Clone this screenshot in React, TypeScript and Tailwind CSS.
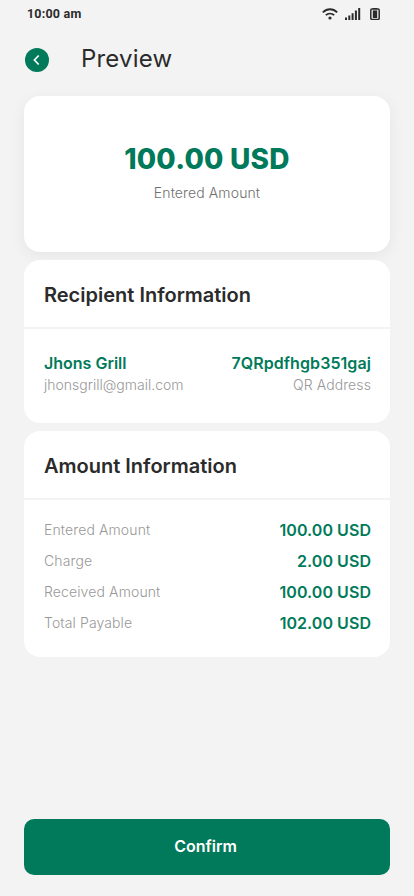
interface Row {
  label: string
  value: string
}

const amountRows: Row[] = [
  { label: "Entered Amount", value: "100.00 USD" },
  { label: "Charge", value: "2.00 USD" },
  { label: "Received Amount", value: "100.00 USD" },
  { label: "Total Payable", value: "102.00 USD" },
]

function StatusBar() {
  return (
    <div className="flex h-7 items-center justify-between pl-[27px] pr-[33px]">
      <span className="font-[Roboto] text-[12.5px] font-bold leading-[14px] tracking-[0.2px] text-[#2b2b2b]">10:00 am</span>
      <div className="flex items-center text-[#2b2b2b]">
        <svg width="16" height="12" viewBox="0 0 16 12" fill="none" stroke="currentColor" strokeWidth="1.8">
          <path d="M.8 4.4C5 .2 11 .2 15.2 4.4M3.8 7.2c2.4-2.2 6-2.2 8.4 0" />
          <circle cx="8" cy="10" r="1.6" fill="currentColor" stroke="none" />
        </svg>
        <svg className="ml-[7px]" width="16" height="12" viewBox="0 0 16 12" fill="currentColor">
          <path d="M0 9.5h2V12H0zM3.3 7.5h2V12h-2zM6.6 5.2h2V12h-2zM9.9 2.4h2V12h-2zM13.2 0h2v12h-2z" />
        </svg>
        <svg className="ml-[9px] mr-px" width="10" height="12" viewBox="0 0 10 12" fill="none" stroke="currentColor">
          <path d="M2.8 0h4.4v1H2.8z" fill="currentColor" stroke="none" />
          <rect x=".8" y="1" width="8.4" height="10.4" rx="1.2" strokeWidth="1.5" />
          <path d="M2.8 2.4h4.4V10H2.8z" fill="currentColor" stroke="none" />
        </svg>
      </div>
    </div>
  )
}

function Header() {
  return (
    <header className="flex h-[68px] items-center gap-8 px-[25px] pb-1">
      <button className="flex size-6 items-center justify-center rounded-full bg-[#007a5a]" aria-label="Back">
        <svg width="12" height="12" viewBox="0 0 12 12" fill="none" stroke="white" strokeWidth="1.7">
          <path d="M7.7 1.5 3.4 6l4.3 4.5" />
        </svg>
      </button>
      <h1 className="-mt-0.5 text-[24px] leading-8 tracking-[0.2px] text-[#2b2b2b]">Preview</h1>
    </header>
  )
}

export default function App() {
  return (
    <div className="flex h-[896px] w-[414px] flex-col bg-[#f3f3f3] font-[Inter,sans-serif]">
      <StatusBar />
      <Header />

      <main className="flex flex-col gap-2 px-6">
        {/* Amount */}
        <section className="flex h-[156px] flex-col items-center justify-center rounded-2xl bg-white pb-1 shadow-[0_4px_16px_rgba(0,0,0,0.06)]">
          <p className="text-[28px] font-extrabold leading-[38px] tracking-[0.25px] text-[#007a5a]">100.00 USD</p>
          <p className="mt-[3px] text-[14px] font-light leading-6 tracking-[0.12px] text-[#6f6f6f]">Entered Amount</p>
        </section>

        {/* Recipient */}
        <section className="relative h-[163px] rounded-2xl bg-white">
          <h2 className="h-[69px] border-b-2 border-[#f3f3f3] px-5 pt-5 text-[20px] font-semibold leading-[30px] text-[#2b2b2b]">
            Recipient Information
          </h2>
          <div className="flex justify-between pl-5 pr-[19px] pt-[22px]">
            <div>
              <p className="text-[16px] font-semibold leading-6 text-[#007a5a]">Jhons Grill</p>
              <p className="text-[14px] font-light leading-5 text-[#989898]">jhonsgrill@gmail.com</p>
            </div>
            <div className="text-right">
              <p className="text-[16px] font-semibold leading-6 tracking-[0.08px] text-[#007a5a]">7QRpdfhgb351gaj</p>
              <p className="text-[14px] font-light leading-5 tracking-[0.1px] text-[#989898]">QR Address</p>
            </div>
          </div>
        </section>

        {/* Breakdown */}
        <section className="h-[226px] rounded-2xl bg-white">
          <h2 className="h-[69px] border-b-2 border-[#f3f3f3] px-5 pt-5 text-[20px] font-semibold leading-[30px] text-[#2b2b2b]">
            Amount Information
          </h2>
          <dl className="flex flex-col gap-[7px] pl-5 pr-[19px] pt-[18px]">
            {amountRows.map((row) => (
              <div key={row.label} className="flex h-6 items-center justify-between">
                <dt className="text-[14px] font-light leading-6 tracking-[0.12px] text-[#989898]">{row.label}</dt>
                <dd className="text-[16px] font-semibold leading-6 tracking-[0.05px] text-[#007a5a]">{row.value}</dd>
              </div>
            ))}
          </dl>
        </section>
      </main>

      <div className="mt-auto px-6 pb-[21px]">
        <button className="h-14 w-full rounded-[10px] bg-[#007a5a] pb-0.5 pr-[3px] text-[16px] font-semibold text-white">Confirm</button>
      </div>
    </div>
  )
}
